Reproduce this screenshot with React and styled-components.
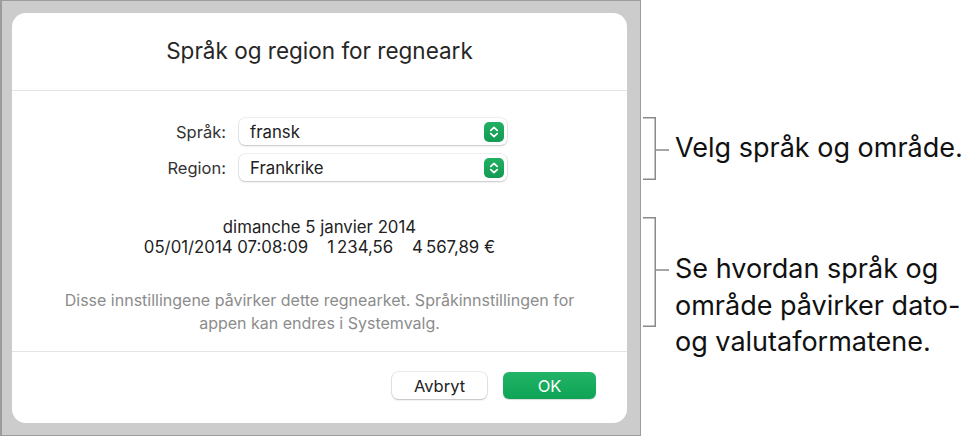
import styled, { createGlobalStyle } from 'styled-components';

const GlobalStyle = createGlobalStyle`
  html, body {
    margin: 0;
    padding: 0;
    background: #ffffff;
  }
  body {
    font-family: Inter, "Liberation Sans", Arial, sans-serif;
    -webkit-font-smoothing: antialiased;
  }
`;

const Page = styled.div`
  display: flex;
  align-items: flex-start;
  width: 975px;
  height: 438px;
`;

const Frame = styled.div`
  box-sizing: border-box;
  width: 641px;
  height: 436px;
  padding: 12px 0 0 10px;
  background: #cccccc;
  border: 1px solid #9c9c9c;
  border-left-width: 2px;
`;

const Dialog = styled.div`
  display: flex;
  flex-direction: column;
  width: 615px;
  height: 410px;
  background: #ffffff;
  border-radius: 14px;
  overflow: hidden;
`;

const Header = styled.div`
  display: flex;
  align-items: center;
  justify-content: center;
  height: 78px;
  border-bottom: 1px solid #e4e4e4;
  font-size: 22.5px;
  color: #262626;
  padding-bottom: 2px;
  box-sizing: border-box;
`;

const Body = styled.div`
  display: flex;
  flex-direction: column;
  align-items: center;
  height: 261px;
  padding-top: 27px;
  box-sizing: border-box;
  border-bottom: 1px solid #e4e4e4;
`;

const FormGrid = styled.div`
  display: grid;
  grid-template-columns: 80px 268px;
  column-gap: 13px;
  row-gap: 9px;
  align-items: center;
  margin-left: 14px;
`;

const Label = styled.div`
  text-align: right;
  font-size: 16.5px;
  color: #333333;
`;

const Select = styled.div`
  display: flex;
  align-items: center;
  justify-content: space-between;
  box-sizing: border-box;
  height: 27px;
  padding: 0 3px 0 11px;
  background: #ffffff;
  border-radius: 6px;
  box-shadow: 0 0 0 0.5px rgba(0, 0, 0, 0.12), 0 1px 2px rgba(0, 0, 0, 0.18);
  font-size: 16.8px;
  color: #222222;
`;

const Stepper = styled.span`
  display: flex;
  align-items: center;
  justify-content: center;
  width: 20px;
  height: 20px;
  border-radius: 5px;
  background: linear-gradient(#22b063, #129a52);
`;

const Preview = styled.div`
  margin-top: 36px;
  text-align: center;
  font-size: 16.8px;
  line-height: 20px;
  color: #222222;
`;

const Gap = styled.span`
  display: inline-block;
  width: ${(p) => p.w}px;
`;

const Note = styled.div`
  margin-top: 32px;
  text-align: center;
  font-size: 16px;
  line-height: 23px;
  color: #8c8c8c;
`;

const Footer = styled.div`
  display: flex;
  justify-content: flex-end;
  gap: 16px;
  padding: 20px 31px 0 0;
`;

const Button = styled.button`
  box-sizing: border-box;
  width: ${(p) => p.w}px;
  height: 27px;
  border: none;
  border-radius: 6px;
  font-family: inherit;
  font-size: 16.5px;
  color: ${(p) => (p.primary ? '#ffffff' : '#222222')};
  background: ${(p) =>
    p.primary ? 'linear-gradient(#22b467, #0ea356)' : '#ffffff'};
  box-shadow: ${(p) =>
    p.primary
      ? '0 0.5px 1px rgba(0,0,0,0.15)'
      : '0 0 0 0.5px rgba(0,0,0,0.14), 0 1px 2px rgba(0,0,0,0.2)'};
`;

const Annotations = styled.div`
  display: flex;
  flex-direction: column;
  gap: 37px;
  padding-top: 117px;
  margin-left: 2px;
`;

const AnnotationRow = styled.div`
  display: flex;
  align-items: flex-start;
`;

const AnnotationText = styled.div`
  margin-top: ${(p) => p.offset}px;
  margin-left: 5px;
  font-size: 27px;
  line-height: 36.5px;
  color: #111111;
`;

function Bracket({ height, tick }) {
  return (
    <svg width="27" height={height} viewBox={`0 0 27 ${height}`}>
      <path
        d={`M0 0.75 H12.25 V${height - 0.75} H0 M12.25 ${tick} H26`}
        fill="none"
        stroke="#8a8a8a"
        strokeWidth="1.5"
      />
    </svg>
  );
}

function StepperIcon() {
  return (
    <Stepper>
      <svg width="12" height="14" viewBox="0 0 12 14">
        <path
          d="M2.8 5.4 L6 2.4 L9.2 5.4 M2.8 8.6 L6 11.6 L9.2 8.6"
          fill="none"
          stroke="#ffffff"
          strokeWidth="1.7"
          strokeLinecap="round"
          strokeLinejoin="round"
        />
      </svg>
    </Stepper>
  );
}

export default function App() {
  return (
    <>
      <GlobalStyle />
      <Page>
        <Frame>
          <Dialog>
            <Header>Språk og region for regneark</Header>
            <Body>
              <FormGrid>
                <Label>Språk:</Label>
                <Select>
                  fransk
                  <StepperIcon />
                </Select>
                <Label>Region:</Label>
                <Select>
                  Frankrike
                  <StepperIcon />
                </Select>
              </FormGrid>
              <Preview>
                <div>dimanche 5 janvier 2014</div>
                <div>
                  05/01/2014 07:08:09
                  <Gap w={19} />
                  {'1\u202f234,56'}
                  <Gap w={19} />
                  {'4\u202f567,89\u00a0€'}
                </div>
              </Preview>
              <Note>
                Disse innstillingene påvirker dette regnearket. Språkinnstillingen for
                <br />
                appen kan endres i Systemvalg.
              </Note>
            </Body>
            <Footer>
              <Button w={95}>Avbryt</Button>
              <Button w={93} primary>
                OK
              </Button>
            </Footer>
          </Dialog>
        </Frame>
        <Annotations>
          <AnnotationRow>
            <Bracket height={63} tick={33} />
            <AnnotationText offset={13}>Velg språk og område.</AnnotationText>
          </AnnotationRow>
          <AnnotationRow>
            <Bracket height={110} tick={53} />
            <AnnotationText offset={34}>
              Se hvordan språk og
              <br />
              område påvirker dato-
              <br />
              og valutaformatene.
            </AnnotationText>
          </AnnotationRow>
        </Annotations>
      </Page>
    </>
  );
}
